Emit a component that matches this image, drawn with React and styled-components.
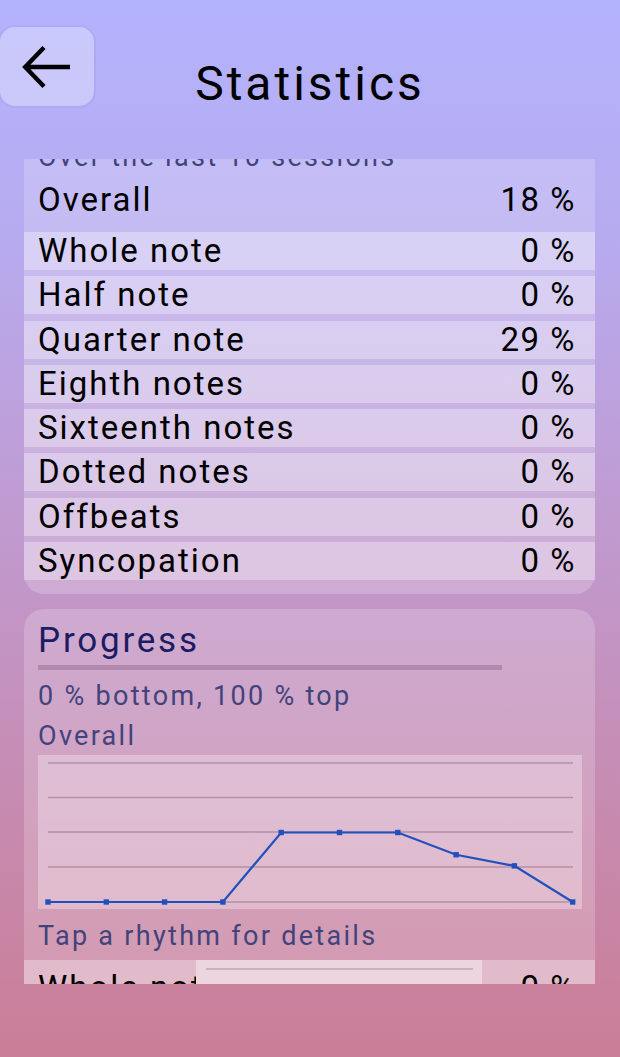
import React from "react";
import styled, { createGlobalStyle } from "styled-components";

const GlobalStyle = createGlobalStyle`
  html, body, #root { margin: 0; padding: 0; height: 100%; }
  body { font-family: Roboto, "Noto Sans", sans-serif; }
  * { box-sizing: border-box; }
`;

const Page = styled.div`
  height: 1057px;
  display: flex;
  flex-direction: column;
  overflow: hidden;
  background: linear-gradient(
    180deg,
    #b3b3fd 0%,
    #b7abf0 22%,
    #c296c8 56%,
    #c78aae 78%,
    #ca7e97 100%
  );
  font-family: Roboto, "Noto Sans", sans-serif;
`;

const Header = styled.header`
  flex: none;
  height: 159px;
  padding-top: 27px;
  display: grid;
  grid-template-columns: 94px 1fr 94px;
  align-items: start;
`;

const BackButton = styled.button`
  width: 94px;
  height: 79px;
  border: none;
  border-radius: 15px;
  background: rgba(255, 255, 255, 0.3);
  box-shadow: 0 0 0 2px rgba(160, 150, 235, 0.25);
  display: flex;
  align-items: center;
  justify-content: center;
  padding: 0;
  cursor: pointer;
`;

const Title = styled.h1`
  margin: 29px 0 0;
  font-size: 48px;
  line-height: 56px;
  font-weight: 400;
  letter-spacing: 3px;
  text-align: center;
  color: #000;
`;

const Viewport = styled.div`
  flex: none;
  height: 825px;
  margin: 0 25px 0 24px;
  overflow: hidden;
`;

const Content = styled.div`
  display: flex;
  flex-direction: column;
  gap: 15px;
  margin-top: -30px;
`;

const Card = styled.section`
  background: rgba(255, 255, 255, 0.2);
  border-radius: 20px;
  padding-top: 12px;
  padding-bottom: ${(p) => p.$pb || 0}px;
  display: flex;
  flex-direction: column;
`;

const Sub = styled.div`
  margin-top: ${(p) => p.$mt || 0}px;
  padding: 0 14px;
  font-size: 27px;
  line-height: 32px;
  letter-spacing: 2.3px;
  color: #43437b;
  white-space: nowrap;
`;

const Heading = styled.h2`
  margin: 0;
  padding: 0 14px;
  font-size: 35px;
  line-height: 40px;
  font-weight: 400;
  letter-spacing: 2.8px;
  color: #1c1c62;
`;

const Underline = styled.div`
  margin: 4px 0 0 14px;
  width: 464px;
  height: 5px;
  background: rgba(100, 60, 100, 0.28);
`;

const RowList = styled.div`
  margin-top: ${(p) => p.$mt || 0}px;
  display: flex;
  flex-direction: column;
  gap: 6.3px;
`;

const Row = styled.div`
  height: ${(p) => p.$h || 38}px;
  display: flex;
  align-items: center;
  padding: 0 19px 0 14px;
  background: ${(p) => (p.$plain ? "transparent" : "rgba(255, 255, 255, 0.32)")};
  font-size: 33px;
  line-height: 38px;
  letter-spacing: 2px;
  color: #000;
  white-space: nowrap;
`;

const Label = styled.span`
  flex: none;
  width: ${(p) => (p.$w ? `${p.$w}px` : "auto")};
  overflow: ${(p) => (p.$w ? "hidden" : "visible")};
`;

const Value = styled.span`
  margin-left: auto;
  letter-spacing: 1.5px;
`;

const ChartBox = styled.div`
  margin: 3px 13px 0 14px;
  height: 154px;
  background: rgba(255, 255, 255, 0.3);
`;

const MiniChart = styled.div`
  flex: none;
  align-self: stretch;
  width: 286px;
  background: rgba(255, 255, 255, 0.38);
`;

const rows = [
  ["Whole note", "0 %"],
  ["Half note", "0 %"],
  ["Quarter note", "29 %"],
  ["Eighth notes", "0 %"],
  ["Sixteenth notes", "0 %"],
  ["Dotted notes", "0 %"],
  ["Offbeats", "0 %"],
  ["Syncopation", "0 %"],
];

const progress = [0, 0, 0, 0, 0.5, 0.5, 0.5, 0.34, 0.26, 0];

function ArrowLeft() {
  return (
    <svg width="50" height="44" viewBox="0 0 50 44" fill="none">
      <path
        d="M22 2.5 L3.2 22 L22 41.5 M3.2 22 H48"
        stroke="#000"
        strokeWidth="4.4"
        strokeLinejoin="miter"
      />
    </svg>
  );
}

function ProgressChart() {
  const grid = [8, 42.5, 77, 112, 147];
  const x0 = 10;
  const step = 58.3;
  const pts = progress.map((v, i) => [x0 + i * step, 147 - v * 139]);
  return (
    <svg width="100%" height="154" viewBox="0 0 544 154">
      {grid.map((y) => (
        <line key={y} x1="10" x2="535" y1={y} y2={y} stroke="#b68ea9" strokeWidth="1.6" />
      ))}
      <polyline
        points={pts.map((p) => p.join(",")).join(" ")}
        fill="none"
        stroke="#2150bd"
        strokeWidth="2.2"
      />
      {pts.map(([x, y], i) => (
        <rect key={i} x={x - 2.7} y={y - 2.7} width="5.4" height="5.4" fill="#2150bd" />
      ))}
    </svg>
  );
}

function MiniLine() {
  return (
    <svg width="286" height="56" viewBox="0 0 286 56">
      <line x1="10" x2="277" y1="9" y2="9" stroke="#c79fb4" strokeWidth="1.5" />
    </svg>
  );
}

export default function App() {
  return (
    <>
      <GlobalStyle />
      <Page>
        <Header>
          <BackButton aria-label="Back">
            <ArrowLeft />
          </BackButton>
          <Title>Statistics</Title>
          <div />
        </Header>
        <Viewport>
          <Content>
            <Card $pb={14}>
              <Sub>Over the last 10 sessions</Sub>
              <RowList $mt={8}>
                <Row $plain>
                  <Label>Overall</Label>
                  <Value>18 %</Value>
                </Row>
              </RowList>
              <RowList $mt={13}>
                {rows.map(([name, val]) => (
                  <Row key={name}>
                    <Label>{name}</Label>
                    <Value>{val}</Value>
                  </Row>
                ))}
              </RowList>
            </Card>
            <Card>
              <Heading>Progress</Heading>
              <Underline />
              <Sub $mt={10}>0 % bottom, 100 % top</Sub>
              <Sub $mt={8}>Overall</Sub>
              <ChartBox>
                <ProgressChart />
              </ChartBox>
              <Sub $mt={11}>Tap a rhythm for details</Sub>
              <RowList $mt={8}>
                <Row $h={56}>
                  <Label $w={158}>Whole note</Label>
                  <MiniChart>
                    <MiniLine />
                  </MiniChart>
                  <Value>0 %</Value>
                </Row>
              </RowList>
            </Card>
          </Content>
        </Viewport>
      </Page>
    </>
  );
}
